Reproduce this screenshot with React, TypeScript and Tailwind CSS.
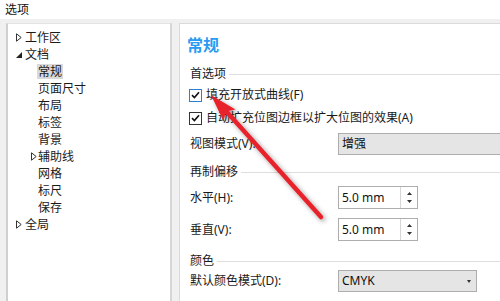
import type { ReactNode } from "react";

const font = "font-['Noto_Sans','Noto_Sans_CJK_SC',sans-serif]";

const TriRight = () => (
  <svg width="6" height="9" viewBox="0 0 6 9" className="shrink-0">
    <path d="M0.5 0.8 L5.2 4.5 L0.5 8.2 Z" fill="white" stroke="#333" strokeWidth="1" />
  </svg>
);

const TriDown = () => (
  <svg width="6" height="6" viewBox="0 0 6 6" className="shrink-0">
    <path d="M6 0 L6 6 L0 6 Z" fill="#222" />
  </svg>
);

type Node = { label: string; level: number; icon?: "right" | "down"; selected?: boolean };

const tree: Node[] = [
  { label: "工作区", level: 0, icon: "right" },
  { label: "文档", level: 0, icon: "down" },
  { label: "常规", level: 1, selected: true },
  { label: "页面尺寸", level: 1 },
  { label: "布局", level: 1 },
  { label: "标签", level: 1 },
  { label: "背景", level: 1 },
  { label: "辅助线", level: 1, icon: "right" },
  { label: "网格", level: 1 },
  { label: "标尺", level: 1 },
  { label: "保存", level: 1 },
  { label: "全局", level: 0, icon: "right" },
];

const Section = ({ title, className }: { title: string; className: string }) => (
  <div className={`flex items-center h-4 ${className}`}>
    <span className="text-[12px] leading-4 text-[#1a1a1a]">{title}</span>
    <div className="flex-1 h-px bg-[#dedede] ml-[3px]" />
  </div>
);

const Check = ({ focused, label, className }: { focused?: boolean; label: ReactNode; className: string }) => (
  <div className={`flex items-center h-4 ${className}`}>
    <div
      className={`w-[13px] h-[13px] -ml-px bg-white border flex items-center justify-center ${
        focused ? "border-[#2b7fd4]" : "border-[#333]"
      }`}
    >
      <svg width="9" height="8" viewBox="0 0 9 8">
        <path d="M1 4.2 L3.4 6.5 L8 1.2" fill="none" stroke="#111" strokeWidth="1.6" />
      </svg>
    </div>
    <span className="ml-[4px] text-[12px] leading-4 text-[#1a1a1a] whitespace-nowrap">{label}</span>
  </div>
);

const Spinner = () => (
  <div className="flex h-[23px] w-[80px] bg-white border border-[#adadad]">
    <div className="flex-1 flex items-center pl-[3px] text-[12px] text-[#111]">5.0 mm</div>
    <div className="w-[17px] border-l border-[#d6d6d6] flex flex-col items-center justify-center gap-[5px]">
      <svg width="5" height="3" viewBox="0 0 5 3">
        <path d="M0 3 L2.5 0 L5 3 Z" fill="#333" />
      </svg>
      <svg width="5" height="3" viewBox="0 0 5 3">
        <path d="M0 0 L2.5 3 L5 0 Z" fill="#333" />
      </svg>
    </div>
  </div>
);

export default function App() {
  return (
    <div className={`relative w-[500px] h-[301px] overflow-hidden bg-[#f0f0f0] ${font}`}>
      {/* title bar */}
      <div className="h-[19px] bg-white pl-[5px] flex items-center text-[12px] text-[#111]">选项</div>

      <div className="flex pt-[4px] pl-[6px] h-[282px]">
        {/* tree */}
        <div className="w-[166px] shrink-0 bg-white border-t border-[#e3e3e3] border-l-2 border-l-[#cfcfcf] border-r-2 border-r-[#d6d6d6] pt-[5px]">
          {tree.map((n) => (
            <div key={n.label} className="h-[17px] flex items-center">
              <div className={`flex items-center ${n.level === 0 ? "pl-[8px]" : "pl-[23px]"}`}>
                <div className={`${n.level === 0 ? "w-[9px]" : "w-[7px]"} flex items-center`}>
                  {n.icon === "right" && <TriRight />}
                  {n.icon === "down" && <TriDown />}
                </div>
                <span
                  className={`text-[12px] leading-[15px] text-[#1a1a1a] ${
                    n.selected ? "bg-[#d9d9d9] px-[1px] -ml-px" : ""
                  }`}
                >
                  {n.label}
                </span>
              </div>
            </div>
          ))}
        </div>

        {/* right panel */}
        <div className="ml-[7px] flex-1 bg-white border-t border-l border-[#dadada] pl-[10px] flex flex-col">
          <div className="mt-[10px] -ml-[3px] h-[22px] leading-[22px] text-[16px] font-bold text-[#2a9bf0]">常规</div>

          <Section title="首选项" className="mt-[10px]" />
          <Check focused className="mt-[5px]" label="填充开放式曲线(F)" />
          <Check className="mt-[7px]" label="自动扩充位图边框以扩大位图的效果(A)" />

          <div className="flex items-center mt-[7px] h-[22px]">
            <span className="w-[148px] text-[12px] text-[#1a1a1a]">视图模式(V):</span>
            <div className="flex-1 h-[22px] bg-[#e5e5e5] border border-[#adadad] border-r-0 flex items-center pl-[3px] text-[12px] text-[#111]">
              增强
            </div>
          </div>

          <Section title="再制偏移" className="mt-[9px]" />

          <div className="flex items-center mt-[6px]">
            <span className="w-[148px] text-[12px] text-[#1a1a1a]">水平(H):</span>
            <Spinner />
          </div>
          <div className="flex items-center mt-[9px]">
            <span className="w-[148px] text-[12px] text-[#1a1a1a]">垂直(V):</span>
            <Spinner />
          </div>

          <Section title="颜色" className="mt-[12px]" />

          <div className="flex items-center mt-[1px]">
            <span className="w-[148px] text-[12px] text-[#1a1a1a]">默认颜色模式(D):</span>
            <div className="w-[139px] h-[22px] bg-[#e5e5e5] border border-[#adadad] flex items-center justify-between pl-[3px] pr-[5px] text-[12px] text-[#111]">
              <span>CMYK</span>
              <svg width="4" height="3" viewBox="0 0 4 3">
                <path d="M0 0 L2 3 L4 0 Z" fill="#333" />
              </svg>
            </div>
          </div>
        </div>
      </div>

      {/* red annotation arrow */}
      <svg className="absolute inset-0 pointer-events-none" width="500" height="301" viewBox="0 0 500 301">
        <defs>
          <filter id="sh" x="-20%" y="-20%" width="140%" height="140%">
            <feDropShadow dx="2" dy="2" stdDeviation="2.5" floodColor="#000" floodOpacity="0.4" />
          </filter>
        </defs>
        <g filter="url(#sh)">
          <line x1="321" y1="217" x2="226" y2="111" stroke="#e8242a" strokeWidth="4.5" strokeLinecap="round" />
          <path d="M211 95 L235.5 109.5 L226 111.5 L223.5 121 Z" fill="#e8242a" />
        </g>
      </svg>
    </div>
  );
}
